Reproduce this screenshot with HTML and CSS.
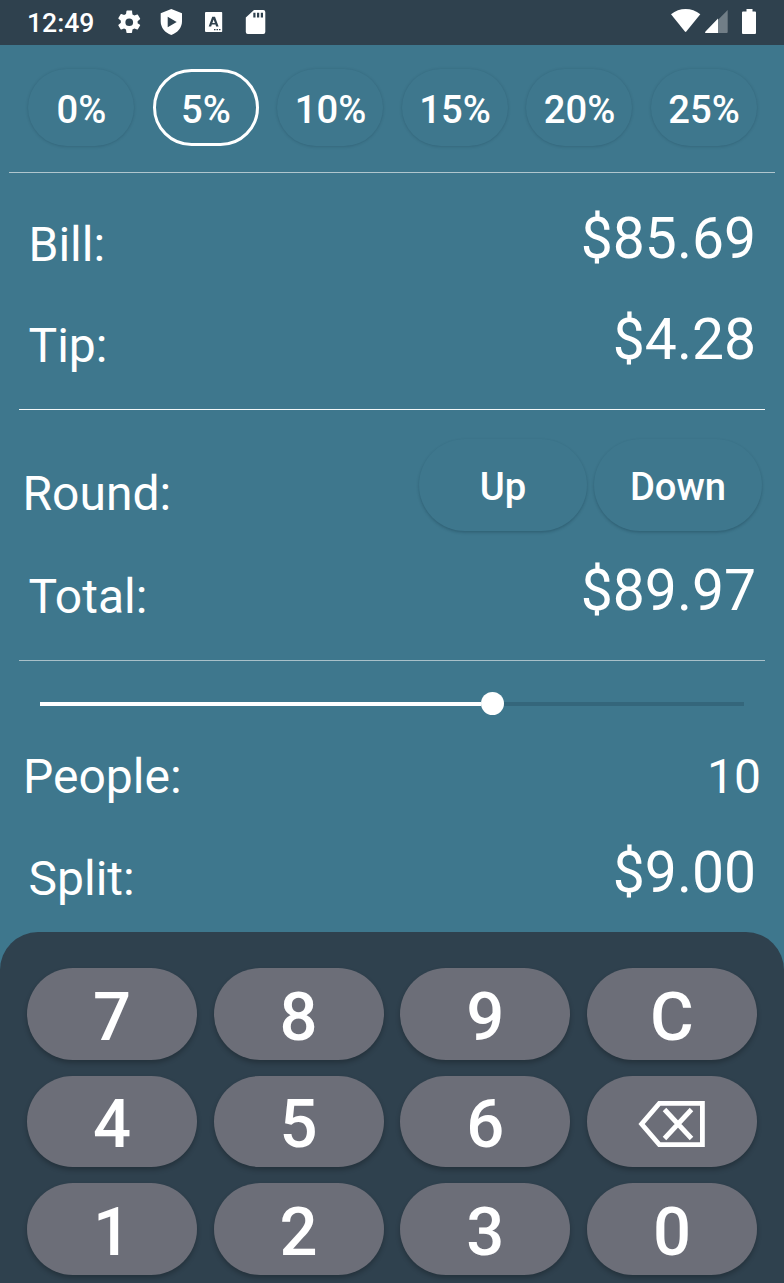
FILE: index.html
```
<!DOCTYPE html>
<html lang="en">
<head>
<meta charset="utf-8">
<title>Tip Calculator</title>
<link rel="stylesheet" href="styles.css">
</head>
<body>
<div class="app">
  <header class="status">
    <span class="clock">12:49</span>
    <svg class="status-left" width="150" height="45" viewBox="0 0 150 45" fill="#fff">
      <path transform="translate(3.2 8.2) scale(1.17)" d="M19.14 12.94c.04-.3.06-.61.06-.94s-.02-.64-.07-.94l2.03-1.58a.49.49 0 0 0 .12-.61l-1.92-3.32a.49.49 0 0 0-.59-.22l-2.39.96a7 7 0 0 0-1.62-.94l-.36-2.54A.48.48 0 0 0 13.92 2h-3.84a.48.48 0 0 0-.47.41l-.36 2.54c-.59.24-1.13.57-1.62.94l-2.39-.96a.48.48 0 0 0-.59.22L2.74 8.470a.48.48 0 0 0 .12.61l2.03 1.580c-.05.3-.09.63-.09.94s.02.64.07.94l-2.03 1.58a.49.49 0 0 0-.12.61l1.920 3.320c.12.22.37.29.59.22l2.39-.96c.5.38 1.03.7 1.62.94l.36 2.540c.05.24.24.41.48.41h3.84c.24 0 .44-.17.47-.41l.36-2.540c.59-.24 1.130-.56 1.620-.94l2.390.96c.22.08.47 0 .59-.22l1.920-3.320a.48.48 0 0 0-.12-.61zM12 15.3a3.300 3.300 0 1 1 0-6.600 3.300 3.300 0 0 1 0 6.600z"/>
      <path fill-rule="evenodd" d="M59.300 9 70 13.200V21.500C70 27.500 65.500 33 59.300 34.900 53.100 33 48.700 27.500 48.700 21.500V13.200zM55.700 16.800v10.400L64.700 22z"/>
      <path fill-rule="evenodd" d="M94 12h15.500q.7 0 .7.700v18.600q0 .7-.7.700H94q-1 0-1-.900V13q0-1 1-1zM100.200 16.800 96.700 26.500h2.500l.6-1.900h3.700l.6 1.900h2.500L103 16.800zM101.600 19.500 102.900 22.900h-2.500zM102 29v1.200h1.500V29zM104.500 29v1.200h1.500V29zM107 29v1.200h1.500V29z"/>
      <path fill-rule="evenodd" d="M142 10h9.300q2 0 2 2v20q0 2-2 2h-15.500q-2 0-2-2V17.500zM141.300 12.700v4.700h2.200v-4.700zM145 12.700v4.700h2.200v-4.700zM148.800 12.700v4.700h2.200v-4.700z"/>
    </svg>
    <svg class="status-right" width="100" height="45" viewBox="0 0 100 45" fill="#fff">
      <path d="M1 14.200C9.500 7.200 21.700 7.200 30.300 14.200L16.300 31.600q-.7.800-1.400 0z"/>
      <path d="M57.700 10v22q0 1-1 1H35z" opacity=".32"/>
      <path d="M48 18.500V33H35.500q-1-.5 0-1.500z"/>
      <path d="M76.500 9h6v2.600h2.500q1 0 1 1v20.300q0 1-1 1H73q-1 0-1-1V12.600q0-1 1-1h3.500z"/>
    </svg>
  </header>

  <nav class="tips">
    <button class="tip">0%</button>
    <button class="tip selected">5%</button>
    <button class="tip">10%</button>
    <button class="tip">15%</button>
    <button class="tip">20%</button>
    <button class="tip">25%</button>
  </nav>

  <section class="panel bill">
    <div class="row"><span class="label">Bill:</span><span class="amount">$85.69</span></div>
    <div class="row"><span class="label">Tip:</span><span class="amount">$4.28</span></div>
  </section>

  <section class="panel total">
    <div class="row row-round">
      <span class="label">Round:</span>
      <div class="round-buttons"><button class="round">Up</button><button class="round">Down</button></div>
    </div>
    <div class="row"><span class="label">Total:</span><span class="amount">$89.97</span></div>
  </section>

  <section class="split">
    <div class="slider"><div class="track-on"></div><div class="thumb"></div><div class="track-off"></div></div>
    <div class="row row-people"><span class="label">People:</span><span class="people">10</span></div>
    <div class="row"><span class="label">Split:</span><span class="amount">$9.00</span></div>
  </section>

  <section class="keypad">
    <button class="key">7</button><button class="key">8</button><button class="key">9</button><button class="key">C</button>
    <button class="key">4</button><button class="key">5</button><button class="key">6</button>
    <button class="key" aria-label="Backspace">
      <svg class="backspace" width="68" height="48" viewBox="0 0 68 48" fill="none" stroke="#fff" stroke-width="4.800">
        <path d="M21.300 3.400H64.400V44.600H21.300L3.600 24z"/>
        <path d="M26.500 9.500 53.500 38.500M53.500 9.500 26.500 38.500"/>
      </svg>
    </button>
    <button class="key">1</button><button class="key">2</button><button class="key">3</button><button class="key">0</button>
  </section>
</div>
</body>
</html>
```
FILE: styles.css
```
* { box-sizing: border-box; }

body {
  margin: 0;
  background: #3e778d;
  color: #fff;
  font-family: Roboto, "Liberation Sans", sans-serif;
}

.app {
  width: 784px;
  height: 1283px;
  display: flex;
  flex-direction: column;
  overflow: hidden;
}

button {
  margin: 0;
  padding: 0;
  border: 0;
  color: inherit;
  background: #3e778d;
  font-family: inherit;
  font-weight: 500;
}

.status {
  flex: none;
  height: 45px;
  display: flex;
  align-items: center;
  padding-left: 27px;
  background: #2f414e;
}

.clock {
  width: 85px;
  font-size: 26.600px;
  font-weight: 500;
  line-height: 43px;
}

.status-left { overflow: visible; }
.status-right { margin-left: auto; margin-right: 14px; }

.tips {
  flex: none;
  height: 128px;
  margin: 0 9px;
  padding: 24px 18.500px 0 19px;
  display: flex;
  justify-content: space-between;
  align-items: flex-start;
  border-bottom: 1px solid #b0c6ce;
}

.tip {
  width: 106px;
  height: 77px;
  padding: 5px 0 0 1px;
  border-radius: 38.5px;
  font-size: 38.200px;
  box-shadow: 0 .5px 3px rgba(20, 50, 65, .28);
}

.tip.selected {
  padding: 5px 0 0 1px;
  border: 3.500px solid #fff;
  box-shadow: none;
}

.panel { flex: none; margin: 0 19px; }
.bill { height: 237px; padding: 15px 10px 0; border-bottom: 1px solid #f4f7f8; }
.total { height: 251px; padding: 25px 10px 0; border-bottom: 1px solid #a8c0c9; }

.row {
  height: 101px;
  display: flex;
  justify-content: space-between;
  align-items: center;
}

.label {
  padding-top: 13px;
  margin-left: -.5px;
  font-size: 48px;
  line-height: 56px;
}

.amount { margin-right: -1px; font-size: 57px; line-height: 66px; }

.row-round { height: 105px; margin: 0 -7px 0 -6px; padding-bottom: 5px; }
.row-round .label { padding-top: 18px; }
.round-buttons { display: flex; gap: 7px; }

.round {
  width: 168px;
  height: 92px;
  padding-top: 3px;
  border-radius: 46px;
  font-size: 38.200px;
  box-shadow: 0 1.500px 3px rgba(20, 50, 65, .32);
}

.split { flex: none; height: 271px; padding: 31px 29px 0; }

.slider {
  height: 23px;
  margin: 0 11px;
  display: flex;
  align-items: center;
}

.track-on { width: 441px; height: 4px; background: #fff; }
.thumb { width: 23px; height: 23px; border-radius: 50%; background: #fff; }
.track-off { flex: 1; height: 4px; background: #34667b; }
.row-people { height: 102px; margin: 5px -6px 0; }
.row-people .label { margin-left: 0; padding-top: 12px; }
.people { padding-top: 12px; font-size: 48px; line-height: 56px; }

.keypad {
  flex: 1;
  display: grid;
  grid-template-columns: repeat(4, 170px);
  justify-content: space-between;
  grid-auto-rows: 91.500px;
  gap: 16px;
  align-content: start;
  padding: 36px 27px 0;
  border-radius: 38px 38px 0 0;
  background: #2f414e;
}

.key {
  display: flex;
  align-items: center;
  justify-content: center;
  padding-top: 6px;
  border-radius: 46px;
  background: #6c6e78;
  font-size: 67px;
  box-shadow: 0 3px 5px rgba(0, 0, 0, .24);
}
```
